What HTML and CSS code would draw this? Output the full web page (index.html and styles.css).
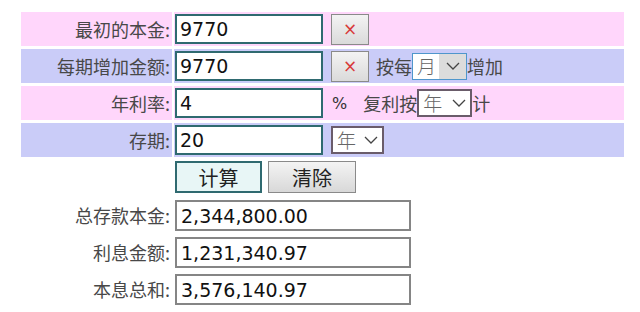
FILE: index.html
```html
<!DOCTYPE html>
<html>
<head>
    <meta charset="utf-8">
    <title>复利计算器</title>
    <link rel="stylesheet" href="styles.css">
</head>
<body>
    <div class="calc">
        <div class="inputs">
            <div class="row pink">
                <label class="label" for="principal">最初的本金:</label>
                <div class="field">
                    <input class="num" type="text" id="principal" value="9770">
                    <button class="clear-btn">&times;</button>
                </div>
            </div>

            <div class="row blue">
                <label class="label" for="monthly">每期增加金额:</label>
                <div class="field">
                    <input class="num" type="text" id="monthly" value="9770">
                    <button class="clear-btn">&times;</button>
                    <span class="text by-each">按每</span>
                    <span class="sel sel-month">
                        <select id="period">
                            <option>月</option>
                            <option>年</option>
                        </select>
                        <span class="arrow-box">
                            <svg width="14" height="8" viewBox="0 0 14 8"><path d="M1 1 L7 7 L13 1" fill="none" stroke="#444" stroke-width="1.3"/></svg>
                        </span>
                    </span>
                    <span class="text">增加</span>
                </div>
            </div>

            <div class="row pink">
                <label class="label" for="rate">年利率:</label>
                <div class="field">
                    <input class="num" type="text" id="rate" value="4">
                    <span class="percent">%</span>
                    <span class="text compound">复利按</span>
                    <span class="sel sel-year">
                        <select id="compound">
                            <option>年</option>
                            <option>月</option>
                        </select>
                        <span class="arrow-box">
                            <svg width="14" height="8" viewBox="0 0 14 8"><path d="M1 1 L7 7 L13 1" fill="none" stroke="#444" stroke-width="1.3"/></svg>
                        </span>
                    </span>
                    <span class="text">计</span>
                </div>
            </div>

            <div class="row blue short">
                <label class="label" for="years">存期:</label>
                <div class="field">
                    <input class="num" type="text" id="years" value="20">
                    <span class="sel sel-term">
                        <select id="unit">
                            <option>年</option>
                            <option>月</option>
                        </select>
                        <span class="arrow-box">
                            <svg width="14" height="8" viewBox="0 0 14 8"><path d="M1 1 L7 7 L13 1" fill="none" stroke="#444" stroke-width="1.3"/></svg>
                        </span>
                    </span>
                </div>
            </div>
        </div>

        <div class="actions">
            <button class="btn btn-calc">计算</button>
            <button class="btn btn-reset">清除</button>
        </div>

        <div class="results">
            <div class="result-row">
                <span class="label">总存款本金:</span>
                <input class="out" type="text" value="2,344,800.00" readonly>
            </div>
            <div class="result-row">
                <span class="label">利息金额:</span>
                <input class="out" type="text" value="1,231,340.97" readonly>
            </div>
            <div class="result-row">
                <span class="label">本息总和:</span>
                <input class="out" type="text" value="3,576,140.97" readonly>
            </div>
        </div>
    </div>
</body>
</html>
```

FILE: styles.css
```css
body {
    margin: 0;
    font-family: "Noto Sans CJK SC", sans-serif;
    background: #fff;
    color: #444;
}

.calc {
    padding: 12px 0 0 21px;
}

.inputs {
    display: flex;
    flex-direction: column;
    gap: 3px;
    width: 603px;
}

.row {
    display: grid;
    grid-template-columns: 151px 450px;
    column-gap: 2px;
    height: 34px;
}

.row.short {
    height: 32px;
}

.row.pink .label,
.row.pink .field {
    background: #ffd6fb;
}

.row.blue .label,
.row.blue .field {
    background: #caccf8;
}

.label {
    display: block;
    text-align: right;
    font-size: 18px;
    line-height: 34px;
    color: #484848;
    padding-right: 2px;
    white-space: nowrap;
}

.field {
    display: flex;
    align-items: center;
    padding-left: 1px;
}

.num {
    box-sizing: border-box;
    width: 148px;
    height: 30px;
    border: 2px solid #2f6a70;
    padding: 0 3px;
    font-family: "DejaVu Sans", sans-serif;
    font-size: 19px;
    color: #111;
    background: #fff;
    outline: none;
}

.clear-btn {
    box-sizing: border-box;
    width: 38px;
    height: 31px;
    margin-left: 8px;
    border: 1px solid #8a8a8a;
    background: linear-gradient(#f3f3f3, #dadada);
    color: #d83a3a;
    font-size: 17px;
    line-height: 1;
    padding: 0;
    font-family: "DejaVu Sans", sans-serif;
}

.text {
    font-size: 18px;
    color: #484848;
    white-space: nowrap;
}

.by-each {
    margin-left: 7px;
}

.percent {
    margin-left: 9px;
    font-family: "DejaVu Sans", sans-serif;
    font-size: 16px;
    color: #333;
}

.compound {
    margin-left: 16px;
}

.sel {
    position: relative;
    display: inline-block;
}

.sel select {
    appearance: none;
    -webkit-appearance: none;
    box-sizing: border-box;
    height: 28px;
    border: 2px solid #6a5c6a;
    background: #fff;
    font-family: "Noto Sans CJK SC", sans-serif;
    font-size: 19px;
    font-weight: 300;
    line-height: 24px;
    color: #666;
    padding: 0 0 0 4px;
    border-radius: 0;
    outline: none;
}

.sel .arrow-box {
    position: absolute;
    right: 2px;
    top: 2px;
    bottom: 2px;
    width: 22px;
    display: flex;
    align-items: center;
    justify-content: center;
    pointer-events: none;
}

.sel-month select {
    width: 55px;
    height: 27px;
    border: 1px solid #4f96cc;
}

.sel-month .arrow-box {
    right: 1px;
    top: 1px;
    bottom: 1px;
    width: 27px;
    background: #dcdcdc;
}

.sel-year select {
    width: 55px;
}

.sel-term select {
    width: 53px;
}

.sel-term {
    margin-left: 8px;
}

.actions {
    display: flex;
    gap: 6px;
    margin: 6px 0 0 154px;
}

.btn {
    box-sizing: border-box;
    height: 32px;
    width: 88px;
    font-family: "Noto Sans CJK SC", sans-serif;
    font-size: 20px;
    color: #222;
    padding: 0;
}

.btn-calc {
    width: 87px;
    border: 2px solid #2f6a70;
    background: #e8f6f6;
}

.btn-reset {
    border: 1px solid #8a8a8a;
    background: linear-gradient(#f4f4f4, #d8d8d8);
}

.results {
    display: flex;
    flex-direction: column;
    gap: 6px;
    margin-top: 7px;
}

.result-row {
    display: grid;
    grid-template-columns: 151px 236px;
    column-gap: 3px;
    height: 31px;
}

.result-row .label {
    line-height: 31px;
}

.out {
    box-sizing: border-box;
    width: 236px;
    height: 31px;
    border: 2px solid #858585;
    padding: 0 4px;
    font-family: "DejaVu Sans", sans-serif;
    font-size: 19px;
    color: #111;
    background: #fff;
    outline: none;
}
```
